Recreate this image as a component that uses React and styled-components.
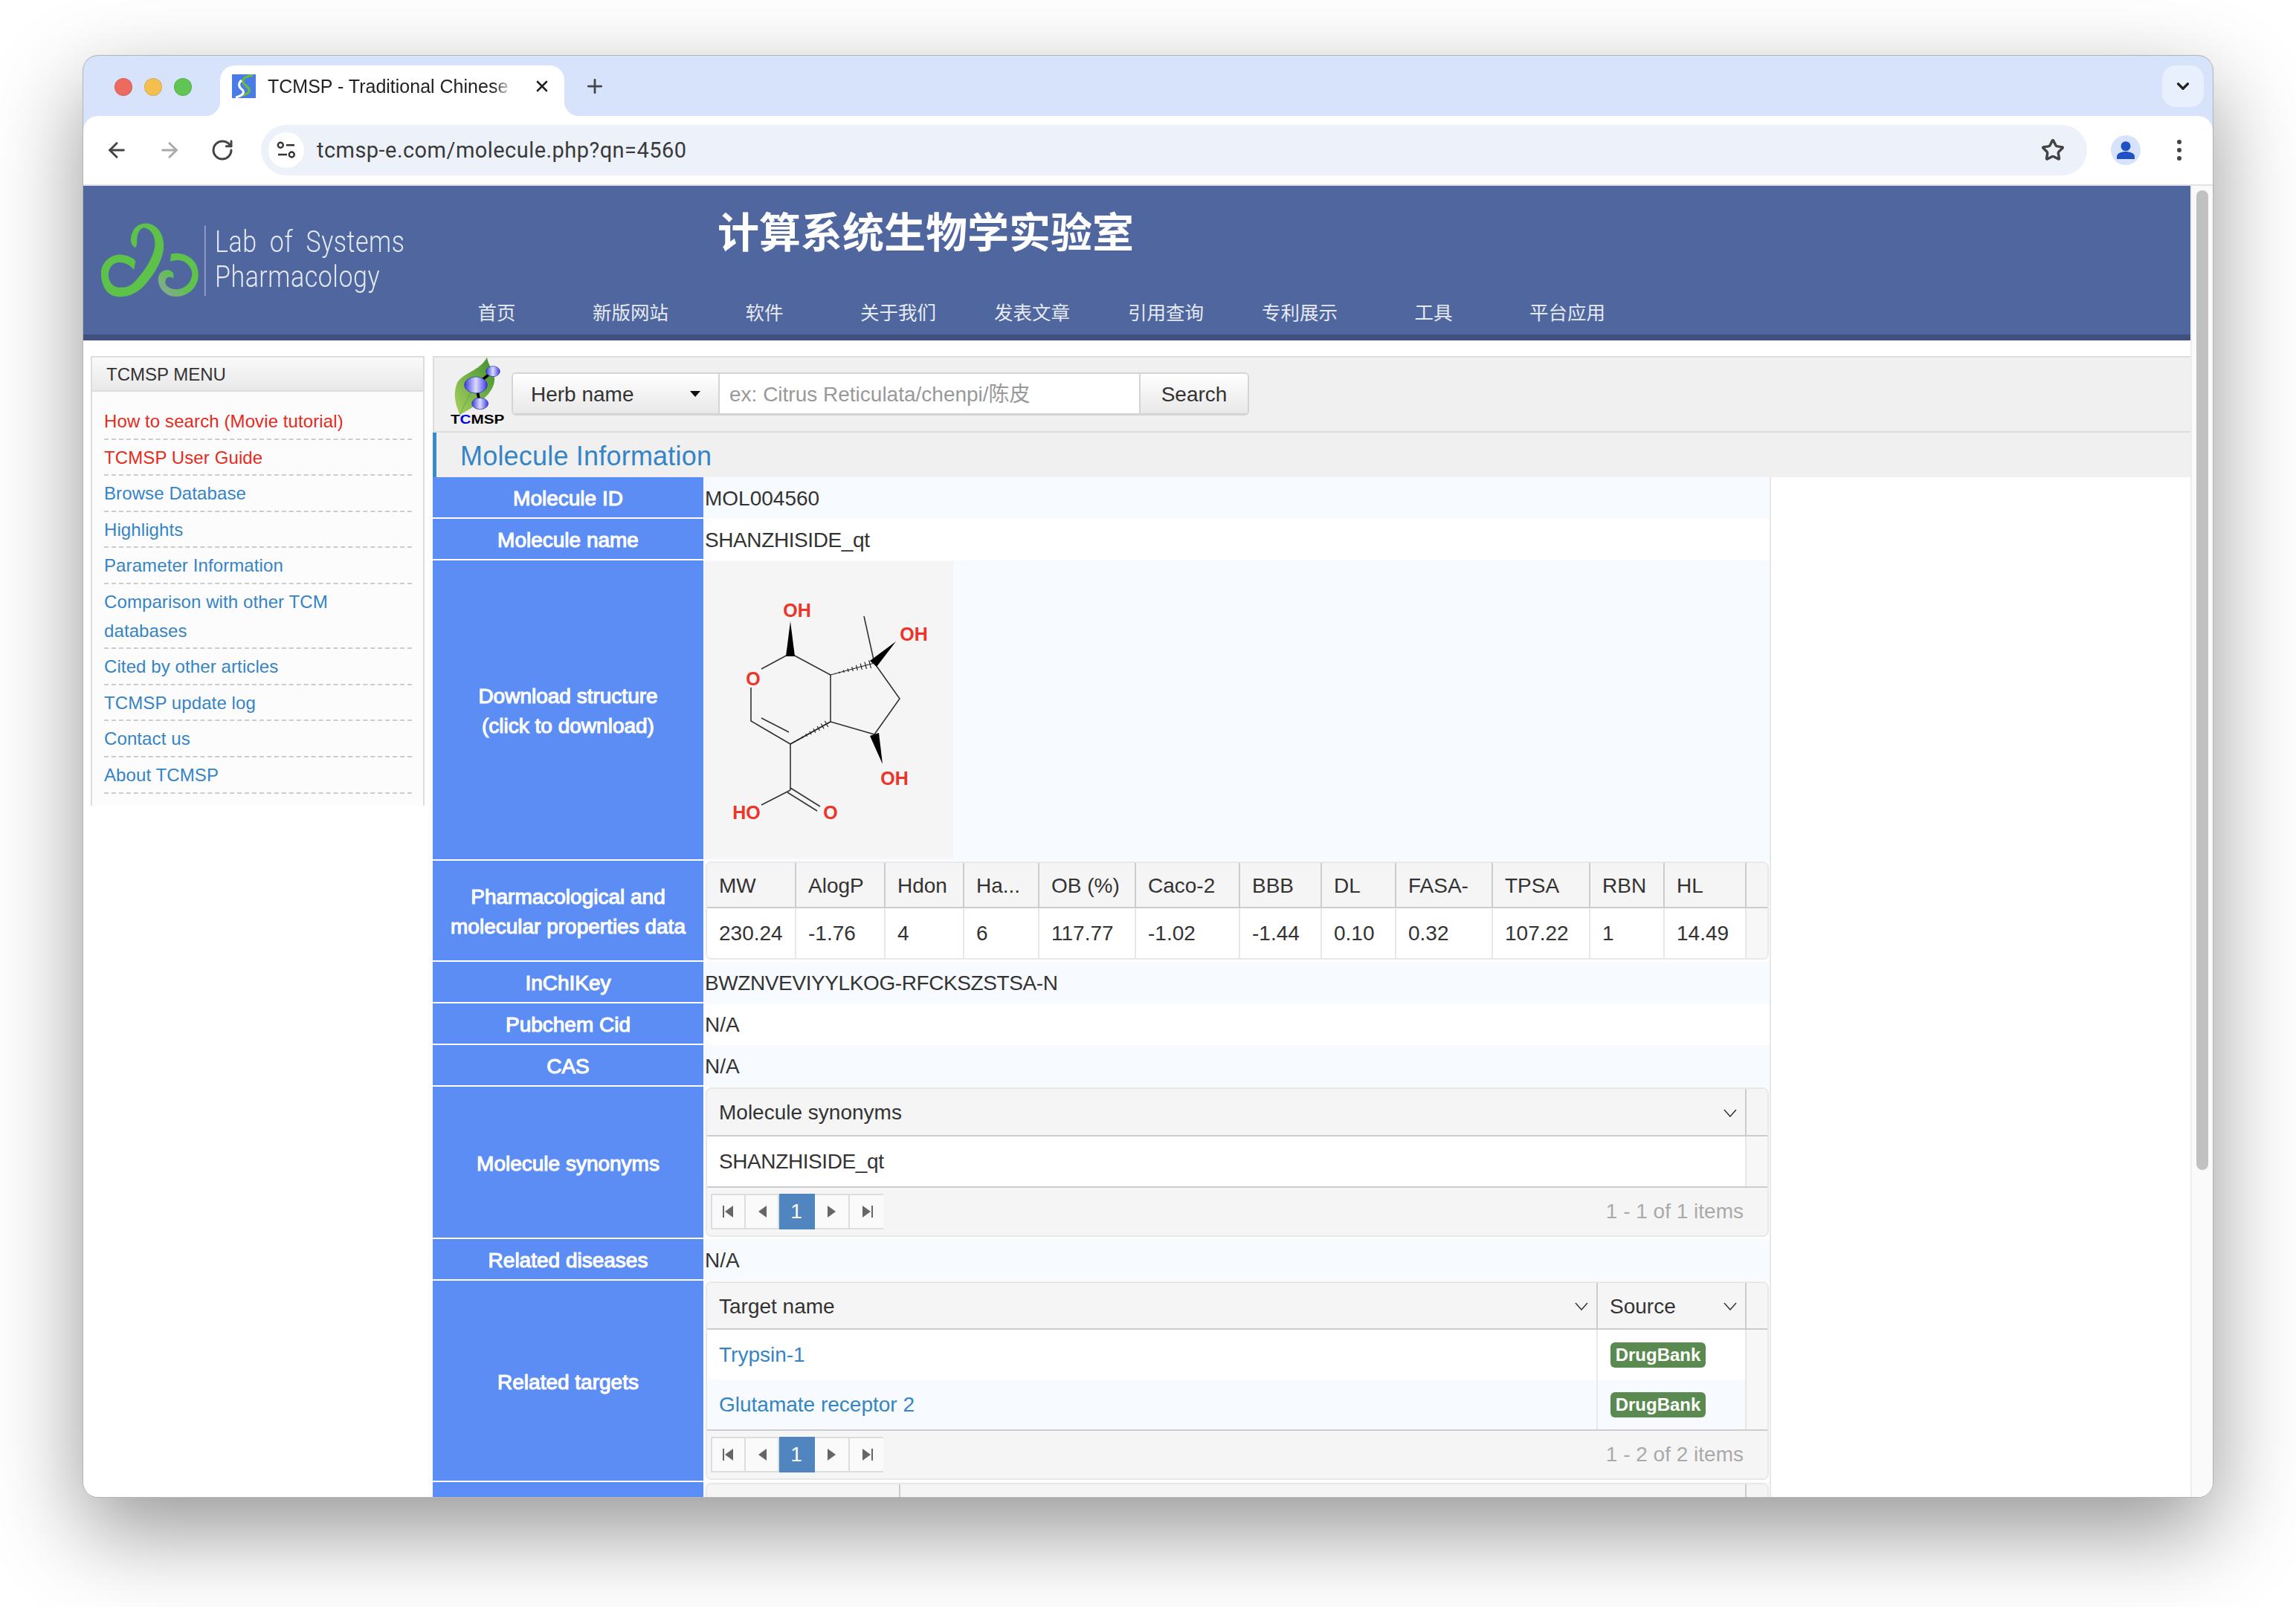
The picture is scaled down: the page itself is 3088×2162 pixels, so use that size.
import React from "react";
import styled, { createGlobalStyle } from "styled-components";
import { ArrowLeft, ArrowRight, RotateCw, Star, X, Plus, ChevronDown } from "lucide-react";

const GlobalStyle = createGlobalStyle`
  html, body {
    margin: 0;
    background: #fff;
    overflow: hidden;
  }
  body {
    font-family: "Liberation Sans", Arial, sans-serif;
    color: #333;
  }
`;

const Stage = styled.div`
  width: 3088px;
  height: 2162px;
  box-sizing: border-box;
  padding: 75px 112px;
`;

const Window = styled.div`
  width: 2864px;
  height: 1939px;
  border-radius: 20px;
  overflow: hidden;
  display: flex;
  flex-direction: column;
  background: #d6e3fb;
  box-shadow: 0 0 0 1px #b4b4b4, 0 45px 120px rgba(0, 0, 0, 0.42);
`;

const TabStrip = styled.div`
  height: 81px;
  flex: none;
  display: flex;
  align-items: flex-start;
  padding-left: 42px;
`;

const Lights = styled.div`
  display: flex;
  gap: 16px;
  margin-top: 30px;
  width: 142px;
`;

const Light = styled.span`
  width: 24px;
  height: 24px;
  border-radius: 50%;
  box-sizing: border-box;
  background: ${(p) => p.$color};
  border: 1px solid rgba(0, 0, 0, 0.1);
`;

const Tab = styled.div`
  position: relative;
  margin-top: 13px;
  width: 463px;
  height: 68px;
  box-sizing: border-box;
  background: #fff;
  border-radius: 20px 20px 0 0;
  display: flex;
  align-items: center;
  padding: 0 0 12px 16px;

  &::before,
  &::after {
    content: "";
    position: absolute;
    bottom: 0;
    width: 20px;
    height: 20px;
  }
  &::before {
    left: -20px;
    background: radial-gradient(circle at 0 0, transparent 20px, #fff 20.5px);
  }
  &::after {
    right: -20px;
    background: radial-gradient(circle at 100% 0, transparent 20px, #fff 20.5px);
  }
`;

const TabTitle = styled.span`
  width: 345px;
  margin-left: 16px;
  font-size: 25px;
  color: #222;
  white-space: nowrap;
  overflow: hidden;
  -webkit-mask-image: linear-gradient(to right, #000 88%, transparent 96%);
  mask-image: linear-gradient(to right, #000 88%, transparent 96%);
`;

const TabClose = styled.span`
  display: flex;
  margin-left: 12px;
  color: #222;
`;

const NewTab = styled.span`
  display: flex;
  margin: 13px 0 0 26px;
  height: 56px;
  align-items: center;
  color: #444;
`;

const WindowMenu = styled.span`
  margin: 13px 12px 0 auto;
  width: 56px;
  height: 56px;
  border-radius: 18px;
  background: #e9f0fd;
  color: #222;
  display: flex;
  align-items: center;
  justify-content: center;
`;

const Toolbar = styled.div`
  height: 92px;
  flex: none;
  display: flex;
  align-items: center;
  padding-left: 29px;
  background: #fff;
  border-radius: 20px 20px 0 0;
  border-bottom: 2px solid #e3e3e3;
`;

const NavIcon = styled.span`
  display: flex;
  justify-content: center;
  width: 32px;
  margin-right: 39px;
  color: ${(p) => p.$color || "#444"};
`;

const Omnibox = styled.div`
  width: 2456px;
  height: 68px;
  margin-left: -3px;
  box-sizing: border-box;
  border-radius: 34px;
  background: #edf2fa;
  display: flex;
  align-items: center;
  padding: 0 30px 0 10px;
`;

const SiteIcon = styled.span`
  width: 48px;
  height: 48px;
  border-radius: 50%;
  background: #fff;
  display: flex;
`;

const Url = styled.span`
  margin-left: 17px;
  font-family: Roboto, sans-serif;
  font-size: 29px;
  letter-spacing: 0.45px;
  color: #3a3a3a;
  flex: 1;
`;

const Avatar = styled.span`
  width: 40px;
  height: 40px;
  margin-left: 32px;
  border-radius: 50%;
  background: #d6e3fb;
  display: flex;
`;

const DotsIcon = styled.span`
  display: flex;
  margin-left: 48px;
`;

const Viewport = styled.div`
  flex: 1;
  min-height: 0;
  display: flex;
  background: #fff;
`;

const Page = styled.div`
  flex: 1;
  min-width: 0;
  overflow: hidden;
`;

const Gutter = styled.div`
  width: 30px;
  flex: none;
  box-sizing: border-box;
  background: #fafafa;
  border-left: 2px solid #eee;
  padding: 6px 6px 0 6px;
`;

const Thumb = styled.div`
  width: 16px;
  height: 1318px;
  border-radius: 8px;
  background: #c1c1c1;
`;

const Header = styled.header`
  height: 200px;
  background: #50669e;
  border-bottom: 8px solid #41507f;
  display: flex;
`;

const Brand = styled.div`
  width: 466px;
  flex: none;
  box-sizing: border-box;
  padding: 40px 0 0 13px;
  display: flex;
  align-items: flex-start;
`;

const Drawing = styled.svg`
  flex: none;
`;

const BrandName = styled.div`
  margin: 12px 0 0 4px;
  font-family: Roboto, sans-serif;
  font-weight: 300;
  font-size: 40px;
  line-height: 47px;
  letter-spacing: 0.6px;
  word-spacing: 10px;
  color: #e3e8f1;
  white-space: nowrap;
  transform: scaleX(0.85);
  transform-origin: left center;
`;

const HeaderRight = styled.div`
  padding-top: 24px;
`;

const LabTitle = styled.h1`
  margin: 0 0 55px 387px;
  font-family: "Noto Sans CJK SC", sans-serif;
  font-size: 56px;
  line-height: 70px;
  font-weight: 700;
  color: #fff;
  white-space: nowrap;
`;

const TopNav = styled.nav`
  display: flex;
`;

const TopNavItem = styled.a`
  width: 180px;
  text-align: center;
  font-family: "Noto Sans CJK SC", sans-serif;
  font-size: 25.5px;
  line-height: 40px;
  color: #e6eaf2;
`;

const Content = styled.div`
  display: flex;
  align-items: flex-start;
  padding: 21px 0 0 10px;
  gap: 11px;
`;

const Sidebar = styled.aside`
  width: 449px;
  flex: none;
  box-sizing: border-box;
  border: 2px solid #ddd;
  border-bottom: 0;
  background: #fcfcfc;
`;

const SidebarTitle = styled.div`
  height: 46px;
  box-sizing: border-box;
  padding-left: 19px;
  font-size: 24px;
  line-height: 46px;
  color: #333;
  background: linear-gradient(#fafafa, #e8e8e8);
  border-bottom: 2px solid #ddd;
`;

const MenuList = styled.ul`
  list-style: none;
  margin: 0;
  padding: 16px 15px 16px 16px;
`;

const MenuItem = styled.li`
  padding: 5px 0 3px;
  font-size: 24px;
  line-height: 38.6px;
  letter-spacing: 0.1px;
  border-bottom: 2px dashed #ccc;
  color: ${(p) => (p.$red ? "#e8291c" : "#3584c6")};
`;

const Main = styled.main`
  flex: 1;
  min-width: 0;
`;

const SearchBar = styled.div`
  height: 103px;
  box-sizing: border-box;
  border: solid #ddd;
  border-width: 2px 0 2px 2px;
  background: #f0f0f0;
  padding-left: 16px;
  display: flex;
  align-items: flex-start;
`;

const SearchGroup = styled.div`
  margin-top: 20px;
  height: 58px;
  box-sizing: border-box;
  display: flex;
  border: 2px solid #d4d4d4;
  border-bottom-width: 3px;
  border-radius: 6px;
  font-size: 28px;
  background: #fff;
  overflow: hidden;
`;

const SearchSelect = styled.div`
  width: 278px;
  box-sizing: border-box;
  padding: 2px 24px 0;
  display: flex;
  align-items: center;
  justify-content: space-between;
  background: linear-gradient(#fff, #e8e8e8);
  border-right: 2px solid #d4d4d4;
  color: #333;
`;

const Caret = styled.span`
  width: 0;
  height: 0;
  margin-top: -2px;
  border: 7px solid transparent;
  border-top: 8px solid #111;
  border-bottom: 0;
`;

const SearchInput = styled.div`
  width: 564px;
  box-sizing: border-box;
  padding: 2px 0 0 13px;
  font-family: "Liberation Sans", "Noto Sans CJK SC", sans-serif;
  line-height: 51px;
  color: #999;
`;

const SearchButton = styled.div`
  width: 146px;
  box-sizing: border-box;
  padding-top: 2px;
  text-align: center;
  line-height: 51px;
  color: #333;
  background: linear-gradient(#fff, #e8e8e8);
  border-left: 2px solid #d4d4d4;
`;

const PageHeading = styled.h2`
  margin: 0;
  height: 60px;
  box-sizing: border-box;
  padding: 3px 0 0 32px;
  border-left: 5px solid #3d8acb;
  background: #f0f0f0;
  font-size: 36px;
  font-weight: 400;
  line-height: 57px;
  letter-spacing: 0.2px;
  color: #3584c6;
`;

const InfoTable = styled.div`
  width: 1800px;
  box-sizing: border-box;
  border-right: 2px solid #e8e8e8;
`;

const InfoRow = styled.div`
  display: flex;
  background: #fff;
  &:nth-child(odd) {
    background: #f7fbff;
  }
`;

const Label = styled.div`
  width: 364px;
  flex: none;
  box-sizing: border-box;
  padding: 4px 8px 0;
  min-height: 56px;
  display: flex;
  align-items: center;
  justify-content: center;
  text-align: center;
  background: #5c8df5;
  border-bottom: 2px solid #fff;
  color: #fff;
  font-size: 28px;
  line-height: 40px;
  -webkit-text-stroke: 1.1px #fff;
`;

const Value = styled.div`
  flex: 1;
  min-width: 0;
  padding: 2px 0 0 2px;
  font-size: 28px;
  line-height: 54px;
  letter-spacing: ${(p) => (p.$tight ? "-0.4px" : "0")};
  color: #333;
`;

const GridValue = styled.div`
  flex: 1;
  min-width: 0;
  padding: 1px 1px 3px 3px;
`;

const StructureValue = styled.div`
  flex: 1;
  min-width: 0;
  padding: 1px 0 3px 1px;
`;

const Structure = styled.svg`
  display: block;
  width: 335px;
  height: 400px;
  background: #f5f5f5;
`;

const Grid = styled.div`
  box-sizing: border-box;
  border: 2px solid #e8e8e8;
  border-radius: 8px;
  overflow: hidden;
  background: #fff;
  font-size: 28px;
`;

const GridRow = styled.div`
  box-sizing: border-box;
  display: grid;
  grid-template-columns: ${(p) => p.$cols};
  height: ${(p) => p.$h}px;
  background: ${(p) => (p.$alt ? "#f7fbff" : "#fff")};
  border-bottom: ${(p) => (p.$line ? "2px solid #ccc" : "0")};
`;

const TargetRows = styled.div`
  border-bottom: 2px solid #ccc;
`;

const HeadCell = styled.div`
  box-sizing: border-box;
  display: flex;
  align-items: center;
  justify-content: space-between;
  min-width: 0;
  padding: 2px 0 0 16px;
  background: #f5f5f5;
  border-right: 2px solid #ccc;
  color: #333;
  white-space: nowrap;
`;

const Cell = styled.div`
  display: flex;
  align-items: center;
  padding-left: 16px;
  border-right: 2px solid #e8e8e8;
  color: #333;
  white-space: nowrap;
  letter-spacing: ${(p) => (p.$tight ? "-0.4px" : "0")};
`;

const GutterHead = styled.div`
  background: #f5f5f5;
`;

const GutterCell = styled.div`
  background: #f7f7f7;
`;

const Sort = styled.svg`
  flex: none;
  margin-right: 11px;
`;

const TargetLink = styled.a`
  color: #3584c6;
`;

const Badge = styled.span`
  width: 128px;
  height: 34px;
  border-radius: 6px;
  margin-left: 1px;
  background: #5a8a50;
  color: #fff;
  font-size: 24px;
  font-weight: 700;
  line-height: 33px;
  text-align: center;
`;

const Pager = styled.div`
  height: 64px;
  box-sizing: border-box;
  padding: 8px 32px 0 5px;
  background: #f5f5f5;
  display: flex;
  justify-content: space-between;
  color: #aaa;
  line-height: 48px;
`;

const PagerNums = styled.div`
  display: flex;
  height: 48px;
`;

const PagerButton = styled.span`
  width: ${(p) => p.$w}px;
  box-sizing: border-box;
  display: flex;
  align-items: center;
  justify-content: center;
  border: solid #ddd;
  border-width: 2px 2px 2px 0;
  background: ${(p) => (p.$active ? "#5085c0" : "#fafafa")};
  border-color: ${(p) => (p.$active ? "#5085c0" : "#ddd")};
  color: ${(p) => (p.$active ? "#fff" : "#666")};
  &:first-child {
    border-left-width: 2px;
  }
  &:last-child {
    border-right: 0;
  }
`;

const menu = [
  { text: "How to search (Movie tutorial)", red: true },
  { text: "TCMSP User Guide", red: true },
  { text: "Browse Database" },
  { text: "Highlights" },
  { text: "Parameter Information" },
  { text: "Comparison with other TCM databases" },
  { text: "Cited by other articles" },
  { text: "TCMSP update log" },
  { text: "Contact us" },
  { text: "About TCMSP" },
];

const topNav = ["首页", "新版网站", "软件", "关于我们", "发表文章", "引用查询", "专利展示", "工具", "平台应用"];

const propCols = ["120px", "120px", "106px", "101px", "130px", "140px", "110px", "100px", "130px", "131px", "100px", "110px", "1fr"].join(" ");
const props = [
  ["MW", "230.24"],
  ["AlogP", "-1.76"],
  ["Hdon", "4"],
  ["Ha...", "6"],
  ["OB (%)", "117.77"],
  ["Caco-2", "-1.02"],
  ["BBB", "-1.44"],
  ["DL", "0.10"],
  ["FASA-", "0.32"],
  ["TPSA", "107.22"],
  ["RBN", "1"],
  ["HL", "14.49"],
];

const LogoMark = () => (
  <Drawing width="160" height="120" viewBox="0 0 480 360">
    <defs>
      <linearGradient id="fade2" x1="0" y1="1" x2="1" y2="0">
        <stop offset="0.1" stopColor="#86a894" />
        <stop offset="0.45" stopColor="#5ec24c" />
      </linearGradient>
    </defs>
    <path
      fill="#5cc24a"
      d="M172 130C150 120 148 90 160 65C175 35 205 25 235 35C270 48 290 90 285 135C278 190 240 250 195 295C165 320 125 335 85 325C50 315 30 270 33 225C38 185 75 155 115 158C140 160 165 170 172 185L165 220C150 195 110 180 85 195C60 210 55 250 75 275C95 298 140 295 165 270C205 230 245 170 250 120C253 85 235 55 210 50C190 48 180 70 178 95C177 110 178 120 172 130Z"
    />
    <path
      fill="url(#fade2)"
      d="M312 185L315 155C350 145 395 160 415 195C435 235 425 280 395 305C365 330 320 335 295 315C265 295 255 255 270 235C285 215 315 215 325 235L325 255C310 240 292 250 292 270C294 290 320 300 345 297C375 293 400 265 400 235C400 205 370 180 345 180C335 180 322 182 312 185Z"
    />
    <rect x="451" y="40" width="3" height="285" fill="#c7cfe2" />
  </Drawing>
);

const TcmspLogo = () => (
  <Drawing width="88" height="92" viewBox="0 9 264 276">
    <defs>
      <linearGradient id="leaf" x1="0" y1="1" x2="1" y2="0">
        <stop offset="0" stopColor="#a8d060" />
        <stop offset="1" stopColor="#3f8f2e" />
      </linearGradient>
      <linearGradient id="ball" x1="0" y1="0" x2="1" y2="0">
        <stop offset="0" stopColor="#3a3ce0" />
        <stop offset="0.5" stopColor="#dcdcff" />
        <stop offset="1" stopColor="#3a3ce0" />
      </linearGradient>
    </defs>
    <path fill="url(#leaf)" d="M165 8C170 40 190 60 195 90C200 150 130 200 55 240C40 200 25 160 45 110C70 70 140 60 165 8Z" />
    <path stroke="#5d9a3a" strokeWidth="2" fill="none" d="M55 240C80 190 100 140 140 90" />
    <path stroke="#000" strokeWidth="11" fill="none" d="M188 65L120 120L137 195" />
    <ellipse cx="120" cy="120" rx="46" ry="33" fill="url(#ball)" stroke="#2222aa" strokeWidth="2" />
    <ellipse cx="189" cy="65" rx="28" ry="21" fill="url(#ball)" stroke="#2222aa" strokeWidth="2" />
    <ellipse cx="137" cy="195" rx="33" ry="23" fill="url(#ball)" stroke="#2222aa" strokeWidth="2" />
    <text x="18" y="275" fontFamily="Liberation Sans" fontWeight="700" fontSize="52" textLength="217" lengthAdjust="spacingAndGlyphs">
      T<tspan fill="#0000e0">C</tspan>MSP
    </text>
  </Drawing>
);

const Favicon = () => (
  <Drawing width="32" height="32" viewBox="0 0 32 32">
    <rect width="32" height="32" fill="#4a7ce8" />
    <path fill="none" stroke="#6cc02c" strokeWidth="3" d="M28 1C18 3 13 6 15 11C17 16 25 17 23 23C22 26 17 28 12 28" />
    <path fill="none" stroke="#fff" strokeWidth="3" d="M13 8C8 12 9 17 13 20C17 23 17 28 5 31" />
  </Drawing>
);

const SiteGlyph = () => (
  <svg width="48" height="48" viewBox="0 0 48 48" fill="none" stroke="#333" strokeWidth="2.4">
    <circle cx="16.3" cy="17.3" r="3.5" />
    <path d="M24 17.3H35M13 30H25" />
    <circle cx="31.3" cy="30" r="3.5" />
  </svg>
);

const PersonGlyph = () => (
  <svg width="40" height="40" viewBox="0 0 40 40" fill="#1f50c4">
    <circle cx="20" cy="14.7" r="6.5" />
    <path d="M8 32V29C8 24 14 22 20 22S32 24 32 29V32Z" />
  </svg>
);

const DotsGlyph = () => (
  <svg width="8" height="32" viewBox="0 0 8 32" fill="#444">
    <circle cx="4" cy="5" r="3" />
    <circle cx="4" cy="16" r="3" />
    <circle cx="4" cy="27" r="3" />
  </svg>
);

// small triangles of the grid pager
const PagerIcon = ({ dir, end }) => (
  <svg width="16" height="18" viewBox="0 0 16 18" fill="#666">
    {dir === "left" ? <path d="M14 1V17L3 9Z" /> : <path d="M2 1V17L13 9Z" />}
    {end && <rect x={dir === "left" ? 0 : 14} y="1" width="2" height="16" />}
  </svg>
);

const PagerBar = ({ info }) => (
  <Pager>
    <PagerNums>
      <PagerButton $w={47}><PagerIcon dir="left" end /></PagerButton>
      <PagerButton $w={45}><PagerIcon dir="left" /></PagerButton>
      <PagerButton $w={48} $active>1</PagerButton>
      <PagerButton $w={47}><PagerIcon dir="right" /></PagerButton>
      <PagerButton $w={45}><PagerIcon dir="right" end /></PagerButton>
    </PagerNums>
    <span>{info}</span>
  </Pager>
);

const SortIcon = () => (
  <Sort width="18" height="11" viewBox="0 0 18 11" fill="none" stroke="#333" strokeWidth="1.5">
    <path d="M1 1L9 10L17 1" />
  </Sort>
);

// hashed stereo bond, hashes widen from (x1,y1) to (x2,y2)
const HashBond = ({ x1, y1, x2, y2, max = 6 }) => {
  const dx = x2 - x1;
  const dy = y2 - y1;
  const len = Math.hypot(dx, dy);
  const nx = -dy / len;
  const ny = dx / len;
  const marks = [];
  for (let i = 1; i <= 9; i++) {
    const t = i / 10;
    const w = max * t;
    const cx = x1 + dx * t;
    const cy = y1 + dy * t;
    marks.push(<line key={i} x1={cx - nx * w} y1={cy - ny * w} x2={cx + nx * w} y2={cy + ny * w} />);
  }
  return (
    <g stroke="#222" strokeWidth="1.2">
      <line x1={x1} y1={y1} x2={x2} y2={y2} />
      {marks}
    </g>
  );
};

const Molecule = () => (
  <Structure viewBox="0 0 335 400">
    <g stroke="#333" strokeWidth="1.6" fill="none">
      <path d="M116 124L77 145M63 170V215L116 246L170 216V153L116 124M77 211L114 230" />
      <path d="M170 216L229 233L263 185L229 137M229 137L215 74" />
      <path d="M116 246V308M116 308L77 328M116 305L156 330M112 311L152 336" />
    </g>
    <path fill="#000" d="M116 81L110 128H122Z" />
    <path fill="#000" d="M258 108L223 134L232 142Z" />
    <path fill="#000" d="M240 273L223 235L235 231Z" />
    <HashBond x1={170} y1={153} x2={229} y2={137} />
    <HashBond x1={116} y1={246} x2={170} y2={216} max={5} />
    <g fill="#ee3328" fontFamily="Liberation Sans" fontWeight="700" fontSize="25" textAnchor="middle">
      <text x="125" y="75">OH</text>
      <text x="282" y="107">OH</text>
      <text x="66" y="167">O</text>
      <text x="256" y="301">OH</text>
      <text x="57" y="347">HO</text>
      <text x="170" y="347">O</text>
    </g>
  </Structure>
);

const targetCols = "1198px 200px 1fr";

const Targets = () => (
  <TargetRows>
    <GridRow $cols={targetCols} $h={67}>
      <Cell><TargetLink>Trypsin-1</TargetLink></Cell>
      <Cell><Badge>DrugBank</Badge></Cell>
      <GutterCell />
    </GridRow>
    <GridRow $cols={targetCols} $h={67} $alt>
      <Cell><TargetLink>Glutamate receptor 2</TargetLink></Cell>
      <Cell><Badge>DrugBank</Badge></Cell>
      <GutterCell />
    </GridRow>
  </TargetRows>
);

export default function App() {
  return (
    <Stage>
      <GlobalStyle />
      <Window>
        <TabStrip>
          <Lights>
            <Light $color="#ed6a5e" />
            <Light $color="#f5bf4f" />
            <Light $color="#61c554" />
          </Lights>
          <Tab>
            <Favicon />
            <TabTitle>TCMSP - Traditional Chinese Medicine Systems Pharmacology</TabTitle>
            <TabClose><X size={24} strokeWidth={2.6} /></TabClose>
          </Tab>
          <NewTab><Plus size={30} strokeWidth={2.2} /></NewTab>
          <WindowMenu><ChevronDown size={26} strokeWidth={3} /></WindowMenu>
        </TabStrip>
        <Toolbar>
          <NavIcon><ArrowLeft size={32} strokeWidth={2.2} /></NavIcon>
          <NavIcon $color="#aaa"><ArrowRight size={32} strokeWidth={2.2} /></NavIcon>
          <NavIcon><RotateCw size={32} strokeWidth={2.2} /></NavIcon>
          <Omnibox>
            <SiteIcon><SiteGlyph /></SiteIcon>
            <Url>tcmsp-e.com/molecule.php?qn=4560</Url>
            <Star size={32} strokeWidth={2.6} color="#444" />
          </Omnibox>
          <Avatar><PersonGlyph /></Avatar>
          <DotsIcon><DotsGlyph /></DotsIcon>
        </Toolbar>
        <Viewport>
          <Page>
            <Header>
              <Brand>
                <LogoMark />
                <BrandName>
                  Lab of Systems
                  <br />
                  Pharmacology
                </BrandName>
              </Brand>
              <HeaderRight>
                <LabTitle>计算系统生物学实验室</LabTitle>
                <TopNav>
                  {topNav.map((t) => (
                    <TopNavItem key={t}>{t}</TopNavItem>
                  ))}
                </TopNav>
              </HeaderRight>
            </Header>
            <Content>
              <Sidebar>
                <SidebarTitle>TCMSP MENU</SidebarTitle>
                <MenuList>
                  {menu.map((m) => (
                    <MenuItem key={m.text} $red={m.red}>{m.text}</MenuItem>
                  ))}
                </MenuList>
              </Sidebar>
              <Main>
                <SearchBar>
                  <TcmspLogo />
                  <SearchGroup>
                    <SearchSelect>
                      Herb name
                      <Caret />
                    </SearchSelect>
                    <SearchInput>ex: Citrus Reticulata/chenpi/陈皮</SearchInput>
                    <SearchButton>Search</SearchButton>
                  </SearchGroup>
                </SearchBar>
                <PageHeading>Molecule Information</PageHeading>
                <InfoTable>
                  <InfoRow>
                    <Label>Molecule ID</Label>
                    <Value>MOL004560</Value>
                  </InfoRow>
                  <InfoRow>
                    <Label>Molecule name</Label>
                    <Value $tight>SHANZHISIDE_qt</Value>
                  </InfoRow>
                  <InfoRow>
                    <Label>
                      Download structure
                      <br />
                      (click to download)
                    </Label>
                    <StructureValue><Molecule /></StructureValue>
                  </InfoRow>
                  <InfoRow>
                    <Label>
                      Pharmacological and
                      <br />
                      molecular properties data
                    </Label>
                    <GridValue>
                      <Grid>
                        <GridRow $cols={propCols} $h={61} $line>
                          {props.map(([h]) => <HeadCell key={h}>{h}</HeadCell>)}
                          <GutterHead />
                        </GridRow>
                        <GridRow $cols={propCols} $h={67}>
                          {props.map(([h, v]) => <Cell key={h}>{v}</Cell>)}
                          <GutterCell />
                        </GridRow>
                      </Grid>
                    </GridValue>
                  </InfoRow>
                  <InfoRow>
                    <Label>InChIKey</Label>
                    <Value $tight>BWZNVEVIYYLKOG-RFCKSZSTSA-N</Value>
                  </InfoRow>
                  <InfoRow>
                    <Label>Pubchem Cid</Label>
                    <Value>N/A</Value>
                  </InfoRow>
                  <InfoRow>
                    <Label>CAS</Label>
                    <Value>N/A</Value>
                  </InfoRow>
                  <InfoRow>
                    <Label>Molecule synonyms</Label>
                    <GridValue>
                      <Grid>
                        <GridRow $cols="1398px 1fr" $h={64} $line>
                          <HeadCell>Molecule synonyms<SortIcon /></HeadCell>
                          <GutterHead />
                        </GridRow>
                        <GridRow $cols="1398px 1fr" $h={69} $line>
                          <Cell $tight>SHANZHISIDE_qt</Cell>
                          <GutterCell />
                        </GridRow>
                        <PagerBar info="1 - 1 of 1 items" />
                      </Grid>
                    </GridValue>
                  </InfoRow>
                  <InfoRow>
                    <Label>Related diseases</Label>
                    <Value>N/A</Value>
                  </InfoRow>
                  <InfoRow>
                    <Label>Related targets</Label>
                    <GridValue>
                      <Grid>
                        <GridRow $cols={targetCols} $h={63} $line>
                          <HeadCell>Target name<SortIcon /></HeadCell>
                          <HeadCell>Source<SortIcon /></HeadCell>
                          <GutterHead />
                        </GridRow>
                        <Targets />
                        <PagerBar info="1 - 2 of 2 items" />
                      </Grid>
                    </GridValue>
                  </InfoRow>
                  <InfoRow>
                    <Label />
                    <GridValue>
                      <Grid>
                        <GridRow $cols="260px 1138px 1fr" $h={64}>
                          <HeadCell />
                          <HeadCell />
                          <GutterHead />
                        </GridRow>
                      </Grid>
                    </GridValue>
                  </InfoRow>
                </InfoTable>
              </Main>
            </Content>
          </Page>
          <Gutter><Thumb /></Gutter>
        </Viewport>
      </Window>
    </Stage>
  );
}
